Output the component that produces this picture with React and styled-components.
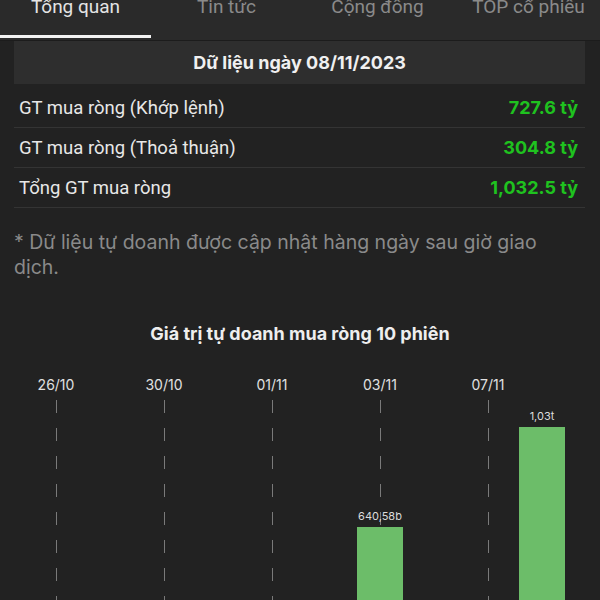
import React from "react";
import styled, { createGlobalStyle } from "styled-components";

const GlobalStyle = createGlobalStyle`
  html, body {
    margin: 0;
    padding: 0;
    overflow: hidden;
    background: #222222;
  }
  body {
    font-family: Inter, "Noto Sans", "DejaVu Sans", sans-serif;
    color: #e6e6e6;
  }
`;

const textFont = `Roboto, "Noto Sans", "DejaVu Sans", sans-serif`;

const tabs = ["Tổng quan", "Tin tức", "Cộng đồng", "TOP cổ phiếu"];

const rows = [
  { label: "GT mua ròng (Khớp lệnh)", value: "727.6 tỷ" },
  { label: "GT mua ròng (Thoả thuận)", value: "304.8 tỷ" },
  { label: "Tổng GT mua ròng", value: "1,032.5 tỷ" },
];

// 10 phiên gần nhất, giá trị tỷ đồng
const sessions = [
  { date: "26/10", value: -210 },
  { date: "27/10", value: -95 },
  { date: "30/10", value: -320 },
  { date: "31/10", value: -140 },
  { date: "01/11", value: -60 },
  { date: "02/11", value: -180 },
  { date: "03/11", value: 640.58, text: "640,58b" },
  { date: "06/11", value: -45 },
  { date: "07/11", value: -120 },
  { date: "08/11", value: 1032.5, text: "1,03t" },
];

const SCALE = 263 / 1032.5;

const Page = styled.div`
  width: 600px;
`;

const TabBar = styled.div`
  display: flex;
  height: 40px;
  background: #2a2a2a;
  border-bottom: 1px solid #1c1c1c;
  overflow: hidden;
`;

const Tab = styled.div`
  position: relative;
  flex: 0 0 151px;
  display: flex;
  justify-content: center;
  align-items: flex-start;
  font-family: ${textFont};
  font-size: 19px;
  line-height: 22px;
  white-space: nowrap;
  color: ${(p) => (p.$active ? "#e4e4e4" : "#8a8a8a")};

  span {
    margin-top: -4px;
  }

  &::after {
    content: "";
    display: ${(p) => (p.$active ? "block" : "none")};
    position: absolute;
    left: 0;
    right: 0;
    bottom: 2px;
    height: 3px;
    background: #f2f2f2;
  }
`;

const Card = styled.div`
  margin: 0 15px 0 14px;
`;

const CardHeader = styled.div`
  height: 43px;
  display: flex;
  align-items: center;
  justify-content: center;
  background: #2e2e2e;
  font-size: 18px;
  font-weight: 700;
  color: #f0f0f0;
`;

const RowList = styled.div`
  margin-top: 4px;
`;

const Row = styled.div`
  height: 39px;
  display: flex;
  align-items: center;
  justify-content: space-between;
  padding: 0 7px 0 5px;
  border-bottom: 1px solid #343434;
`;

const RowLabel = styled.span`
  font-family: ${textFont};
  font-size: 18.5px;
  color: #e8e8e8;
`;

const RowValue = styled.span`
  font-size: 18px;
  color: #1fc21f;
  font-weight: 700;
`;

const Note = styled.p`
  margin: 22px 40px 0 14px;
  font-size: 19.5px;
  line-height: 25px;
  color: #8a8a8a;
`;

const Chart = styled.section`
  margin-top: 42px;
`;

const ChartTitle = styled.h2`
  margin: 0;
  text-align: center;
  font-size: 18px;
  line-height: 24px;
  font-weight: 700;
  color: #eeeeee;
`;

const Columns = styled.div`
  display: flex;
  padding-left: 29px;
  margin-top: 30px;
`;

const Column = styled.div`
  flex: 0 0 54px;
  display: flex;
  flex-direction: column;
  align-items: center;
`;

const DateLabel = styled.div`
  height: 18px;
  line-height: 18px;
  font-size: 14px;
  color: #e0e0e0;
  white-space: nowrap;
`;

const Plot = styled.div`
  position: relative;
  margin-top: 6px;
  width: 100%;
  height: 290px;
  display: flex;
  flex-direction: column;
  justify-content: flex-end;
  align-items: center;
`;

const GridLine = styled.div`
  position: absolute;
  top: 0;
  bottom: 0;
  left: 50%;
  width: 1px;
  background: repeating-linear-gradient(
    to bottom,
    #7a7a7a 0 13px,
    transparent 13px 28px
  );
`;

const BarValue = styled.div`
  position: relative;
  font-size: 11px;
  line-height: 14px;
  color: #dcdcdc;
  margin-bottom: 4px;
  white-space: nowrap;
`;

const Bar = styled.div`
  position: relative;
  width: 46px;
  background: #6cbd69;
`;

export default function App() {
  return (
    <Page>
      <GlobalStyle />
      <TabBar>
        {tabs.map((t, i) => (
          <Tab key={t} $active={i === 0}>
            <span>{t}</span>
          </Tab>
        ))}
      </TabBar>

      <Card>
        <CardHeader>Dữ liệu ngày 08/11/2023</CardHeader>
        <RowList>
          {rows.map((r) => (
            <Row key={r.label}>
              <RowLabel>{r.label}</RowLabel>
              <RowValue>{r.value}</RowValue>
            </Row>
          ))}
        </RowList>
      </Card>

      <Note>* Dữ liệu tự doanh được cập nhật hàng ngày sau giờ giao dịch.</Note>

      <Chart>
        <ChartTitle>Giá trị tự doanh mua ròng 10 phiên</ChartTitle>
        <Columns>
          {sessions.map((s, i) => (
            <Column key={s.date}>
              <DateLabel>{i % 2 === 0 && i < 9 ? s.date : "\u00a0"}</DateLabel>
              <Plot>
                {i % 2 === 0 && i < 9 && <GridLine />}
                {s.value > 0 && (
                  <>
                    <BarValue>{s.text}</BarValue>
                    <Bar style={{ height: s.value * SCALE }} />
                  </>
                )}
              </Plot>
            </Column>
          ))}
        </Columns>
      </Chart>
    </Page>
  );
}
